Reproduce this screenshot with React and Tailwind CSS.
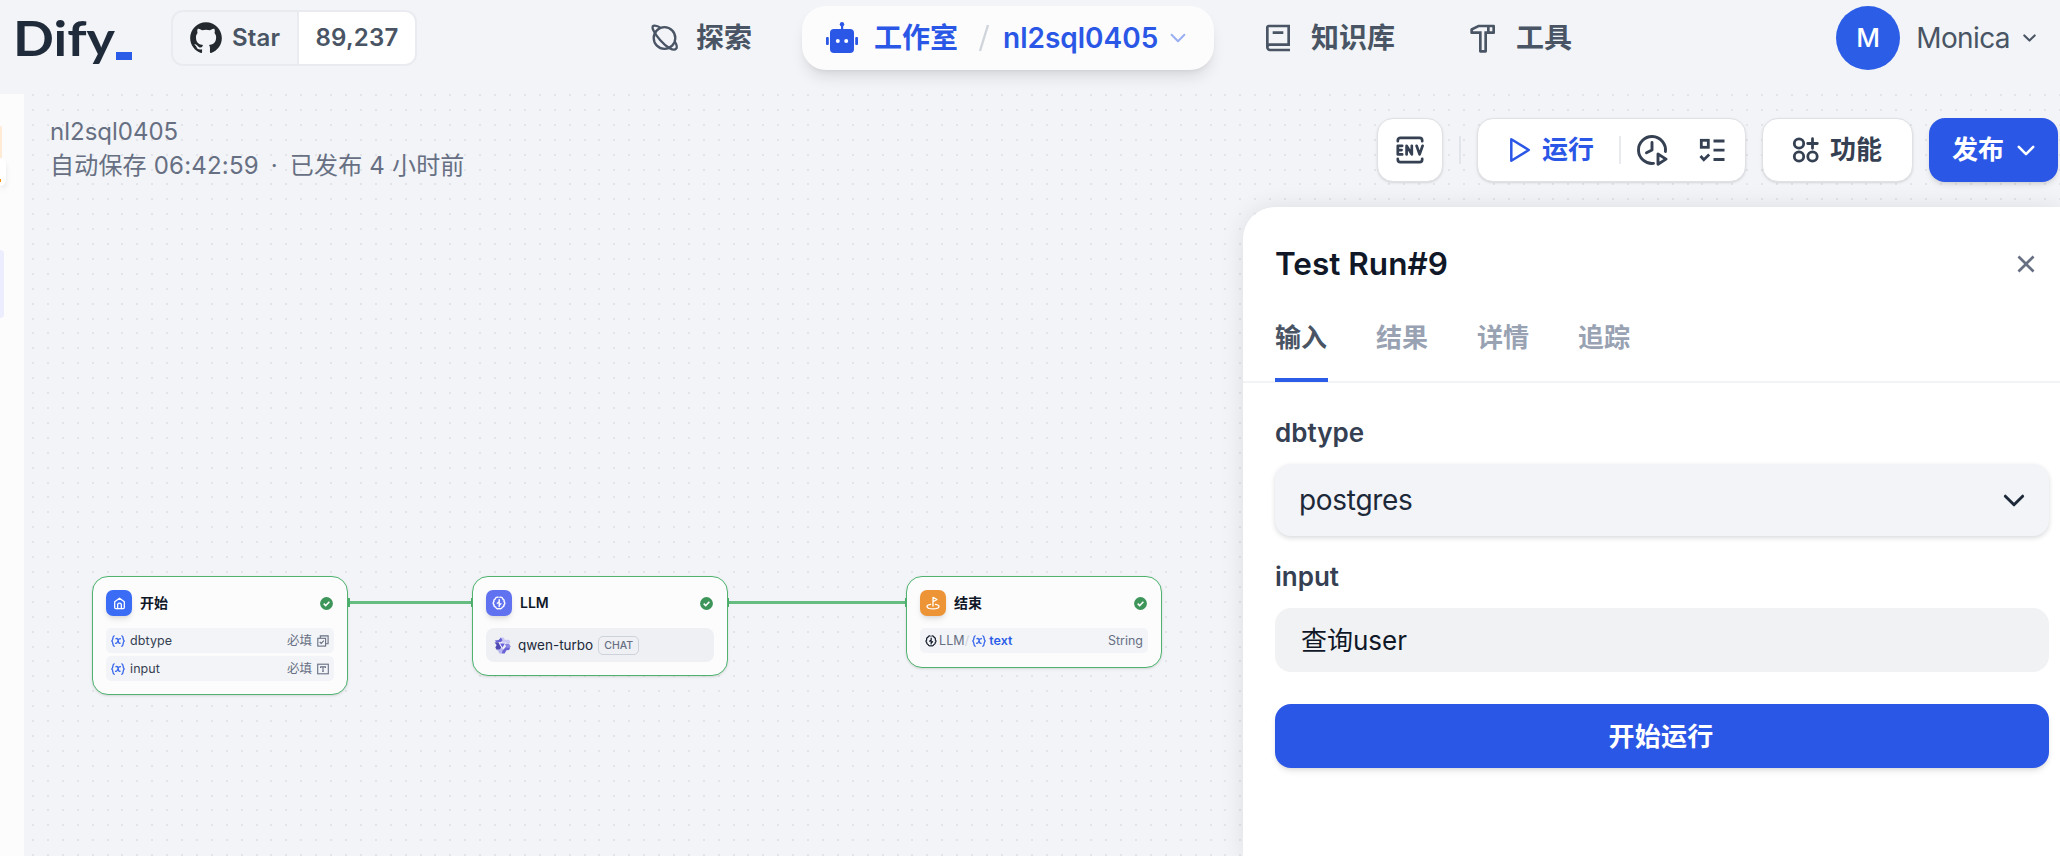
import React from "react";
import { RiHammerLine, RiBook2Line, RiCloseLine, RiGithubFill } from "react-icons/ri";

const dotPath = (() => {
  let d = "";
  for (let r = 0; r < 52; r++)
    for (let c = 0; c < 137; c++)
      d += `M${Math.round(8 + c * 14.906)} ${Math.round(r * 14.906)}h2v2h-2z`;
  return d;
})();

const Chevron = ({ className, w = 2.4 }) => (
  <svg viewBox="0 0 20 12" className={className} fill="none" stroke="currentColor" strokeWidth={w} strokeLinecap="round" strokeLinejoin="round">
    <path d="M2 2l8 8 8-8" />
  </svg>
);

const Explore = () => (
  <svg viewBox="0 0 28 28" className="h-7 w-7 overflow-visible" fill="none" stroke="currentColor" strokeWidth="2.3">
    <circle cx="14.500" cy="14" r="10.800" />
    <path d="M24.800 17.500c2 3.300 2.500 6 1.300 7.300-2.400 2.500-9.600-1.300-15.800-8.500S1 2.900 3.300 1.900c1.700-.8 4.700.2 8 2.300" />
  </svg>
);

const Robot = () => (
  <svg viewBox="0 0 32 32" className="h-8 w-8" fill="currentColor">
    <circle cx="16" cy="2.200" r="2.200" />
    <rect x="15" y="3" width="2.200" height="6" />
    <rect x="4" y="7" width="24" height="24" rx="4" />
    <rect x="0" y="15" width="2.800" height="8" rx="1" />
    <rect x="29.200" y="15" width="2.800" height="8" rx="1" />
    <circle cx="11.800" cy="19" r="2" fill="#fff" />
    <circle cx="20.200" cy="19" r="2" fill="#fff" />
  </svg>
);

const Env = () => (
  <svg viewBox="0 0 28 28" className="h-7 w-7" fill="none" stroke="currentColor" strokeWidth="2.700" strokeLinecap="round" strokeLinejoin="round">
    <path d="M1.800 5.200V4.400a2.600 2.600 0 0 1 2.600-2.600h19.200a2.600 2.600 0 0 1 2.600 2.600v.8M1.800 22.800v.8a2.600 2.600 0 0 0 2.600 2.600h19.200a2.600 2.600 0 0 0 2.600-2.600v-.8" />
    <path d="M6.200 9.800H1.800v8.600h4.400M1.800 14.100H5.600M10.600 18.400V9.800l5.200 8.600V9.800M20.600 9.800l3 8.600 3-8.600" />
  </svg>
);

const Play = () => (
  <svg viewBox="0 0 22 26" className="h-[26px] w-[22px]" fill="none" stroke="currentColor" strokeWidth="2.500" strokeLinejoin="round">
    <path d="M2.300 2.200v21.600L19.800 13z" />
  </svg>
);

const History = () => (
  <svg viewBox="0 0 32 32" className="h-8 w-8" fill="none" stroke="currentColor" strokeWidth="2.900" strokeLinecap="round" strokeLinejoin="round">
    <path d="M17.500 29.400A13.500 13.500 0 1 1 29.400 17.500" />
    <path d="M16 8.500V16l-5.500 2.800" />
    <path d="M22 20v10.200l8-5.100z" />
  </svg>
);

const Checklist = () => (
  <svg viewBox="0 0 26 26" className="h-[26px] w-[26px]" fill="none" stroke="currentColor" strokeWidth="2.800">
    <rect x="2.300" y="3.300" width="7" height="7" />
    <path d="M14.500 4h11M14.500 13.200h11M14.500 22.500h11M1.500 19l3.300 3.700 5.400-5.200" />
  </svg>
);

const Features = () => (
  <svg viewBox="0 0 28 28" className="h-7 w-7" fill="none" stroke="currentColor" strokeWidth="2.800" strokeLinecap="round">
    <circle cx="7" cy="7.500" r="4.700" />
    <circle cx="7" cy="20.500" r="4.700" />
    <circle cx="20.500" cy="20.500" r="4.700" />
    <path d="M20.500 2.700v9.600M15.700 7.500h9.600" />
  </svg>
);

const Check = () => (
  <svg viewBox="0 0 13 13" className="mr-[1px] h-[13px] w-[13px]">
    <circle cx="6.500" cy="6.500" r="6.400" fill="#3d9559" />
    <path d="M3.700 6.600l2 2 3.700-3.800" fill="none" stroke="#fff" strokeWidth="1.500" />
  </svg>
);

const Var = () => (
  <svg viewBox="0 0 14 12" className="h-3 w-3.5 shrink-0 text-[#3a68ec]" fill="none" stroke="currentColor" strokeWidth="1.350" strokeLinecap="round">
    <path d="M3.200.8C1.200.8 2.600 4.800.8 6c1.800 1.200.4 5.200 2.400 5.200M10.800.8c2 0 .6 4 2.400 5.200-1.800 1.200-.4 5.200-2.400 5.200" />
    <path d="M5 3.700c1.600-.6 2.100.7 2.300 2.300s.5 2.800 1.800 2.200M9.400 3.700C8.100 3.400 7 5.500 6.800 6.100S5.700 8.700 4.600 8.300" />
  </svg>
);

const Brain = ({ className }) => (
  <svg viewBox="0 0 14 14" className={className} fill="none" stroke="currentColor" strokeWidth="1.400" strokeLinecap="round" strokeLinejoin="round">
    <path d="M6 1.200C4.500.8 3.400 1.900 3.400 2.800 1.600 3.400 1.700 5 2 5.700.8 6.500 1 8 2 8.600c-.2 1.400.7 2.300 1.700 2.600.6 1.500 2 1.800 2.900 1.400M8 1.200c1.500-.4 2.600.7 2.600 1.600 1.800.6 1.700 2.200 1.400 2.900 1.200.8 1 2.300 0 2.900.2 1.400-.7 2.300-1.700 2.600-.6 1.500-2 1.800-2.900 1.400" />
    <path d="M7.200 3.600v6.800M7.200 5.800L5.300 7.200M7.200 9.200l1.700-1.400" />
  </svg>
);

const HomeGlyph = () => (
  <svg viewBox="0 0 14 14" className="h-[13px] w-[13px]" fill="none" stroke="#fff" strokeWidth="1.400" strokeLinejoin="round" strokeLinecap="round">
    <path d="M1.800 5.200L7 1.300l5.200 3.900v6.200c0 .8-.4 1.200-1.200 1.200H3c-.8 0-1.200-.4-1.200-1.200z" />
    <path d="M5 12.400V8.600a2 2 0 0 1 4 0v3.800" />
  </svg>
);

const FlagGlyph = () => (
  <svg viewBox="0 0 14 14" className="h-3.5 w-3.5" fill="none" stroke="#fff" strokeWidth="1.300" strokeLinejoin="round" strokeLinecap="round">
    <path d="M7 10V1.300l4 2.200-4 2.200" />
    <path d="M4.600 8.300C2.600 8.600 1 9.400 1 10.400 1 11.800 3.700 12.800 7 12.800s6-1 6-2.400c0-1-1.600-1.800-3.600-2.100" />
  </svg>
);

const SelectGlyph = () => (
  <svg viewBox="0 0 12 12" className="h-3 w-3" fill="none" stroke="currentColor" strokeWidth="1.100">
    <rect x=".8" y="3.300" width="7.800" height="7.800" />
    <path d="M3.300 3V.9h7.800v7.800H8.800M2.700 7l1.500 1.500 2.700-2.800" />
  </svg>
);

const TextGlyph = () => (
  <svg viewBox="0 0 12 12" className="h-3 w-3" fill="none" stroke="currentColor" strokeWidth="1.100">
    <rect x=".7" y="1.200" width="10.600" height="9.600" />
    <path d="M3.600 5V3.900h4.800V5M6 3.900v4.300M5 8.300h2" />
  </svg>
);

const Qwen = () => (
  <svg viewBox="0 0 18 18" className="h-[17px] w-[17px]">
    <path d="M7.300.6h3l1.100 2.200h4.700l1.200 2.400-1.300 2.200-6.300-.1-3.300-3.700z" fill="#cbc9f3" />
    <path d="M7.300.6L9 3.400 6.900 5.600H2.200L1 3.800l3.800-.7z" fill="#6a63d6" />
    <path d="M.6 5.900l4-.3 3.100 5.500-1.500 2.300H2.800L1.400 11l1.400-2.400z" fill="#5049b4" />
    <path d="M2.800 13.400l3.400-.2 2.700-2.100 1.600 3.400-2.300 2.900H5.700l-1.200-2.600z" fill="#b7b4ef" />
    <path d="M8.200 17.400l1-3 5.100-5.800 2.900 2.700-1.300 2.400-2.700.2-1.900 3.500z" fill="#6a63d6" />
    <path d="M16 7.400l1.400 2.400-.6 1.500-3.300.3-2.100-4.200z" fill="#8b86e4" />
    <path d="M5 5.900h8L9 12.700z" fill="#f1f1fb" />
    <path d="M6.500 7h5L9 11.200z" fill="#655ddb" />
  </svg>
);

const NodeCard = ({ className, color, glyph, title, children }) => (
  <div className={`absolute top-[482px] w-[256px] rounded-[16px] border-[1.5px] border-[#4fb36f] bg-[#fcfcfd] px-[13px] pb-[13px] pt-[13px] shadow-sm ${className}`}>
    <div className="flex h-[26px] items-center">
      <div className={`flex h-[26px] w-[26px] items-center justify-center rounded-[7px] shadow-md ${color}`}>{glyph}</div>
      <span className="ml-2 flex-1 text-[14px] font-semibold leading-5 text-[#101828]">{title}</span>
      <Check />
    </div>
    {children}
  </div>
);

const StartRow = ({ name, glyph }) => (
  <div className="flex h-[25px] items-center rounded-[5px] bg-[#f2f4f7] px-[5px] pt-[1px] text-[12.500px] text-[#495464]">
    <Var />
    <span className="ml-[5px] flex-1 tracking-[0.1px] text-[#354052]">{name}</span>
    <span className="mr-[5px] text-[#676f83]">必填</span>
    <span className="text-[#676f83]">{glyph}</span>
  </div>
);

const Edge = ({ className }) => (
  <div className={`absolute top-[504px] flex h-[9px] items-center justify-between ${className}`}>
    <span className="h-[9px] w-[2px] bg-[#4fb36f]" />
    <span className="h-[3px] flex-1 bg-[#66bd82]" />
    <span className="h-[9px] w-[2px] bg-[#4fb36f]" />
  </div>
);

const Header = () => (
  <header className="flex h-[94px] items-start text-[28px] font-semibold leading-[64px] text-[#495464]">
    <div className="flex h-[76px] w-[171px] items-center pl-[13px]">
      <svg viewBox="0 0 120 64" className="h-16 w-[120px] overflow-visible">
        <text x="0" y="50" textLength="102" lengthAdjust="spacingAndGlyphs" fontFamily="Lato, sans-serif" fontWeight="700" fontSize="47.500" fill="#1f2a3b">Dify</text>
        <rect x="103" y="46" width="16" height="8" fill="#2b5ce8" />
      </svg>
    </div>
    <div className="mt-[10px] flex h-[56px] w-[246px] overflow-hidden rounded-xl border-2 border-[#e9ebf0] text-[24px] leading-[52px]">
      <div className="flex w-[126px] items-center border-r-2 border-[#e9ebf0] pl-[14px]">
        <RiGithubFill className="h-[38px] w-[38px] text-[#24292f]" />
        <span className="ml-[7px] tracking-[0.2px]">Star</span>
      </div>
      <div className="flex-1 bg-white text-center tracking-[0.2px]">89,237</div>
    </div>
    <nav className="mt-[6px] flex h-16 items-center">
      <div className="ml-[233px] flex w-[152px] items-center gap-[18px]"><Explore /><span>探索</span></div>
      <div className="flex h-16 w-[412px] items-center rounded-[24px] bg-[#fcfcfd] pl-6 text-[#2b57e6] shadow-lg">
        <Robot />
        <span className="ml-4">工作室</span>
        <svg viewBox="0 0 12 28" className="ml-5 h-7 w-3" stroke="#d0d5dc" strokeWidth="2.400"><path d="M2 27L10 1" /></svg>
        <span className="ml-[13px]">nl2sql0405</span>
        <Chevron className="ml-3 h-[10px] w-4 text-[#98aef3]" />
      </div>
      <div className="ml-[48px] flex w-[205px] items-center gap-[17px]"><RiBook2Line className="h-8 w-8" /><span>知识库</span></div>
      <div className="flex items-center gap-[17px]"><RiHammerLine className="h-8 w-8" /><span>工具</span></div>
    </nav>
    <div className="ml-auto mr-6 mt-[6px] flex h-16 items-center font-normal">
      <div className="flex h-16 w-16 items-center justify-center rounded-full bg-[#2c5de6] text-[26px] font-medium text-white">M</div>
      <span className="ml-4 tracking-[-0.6px]">Monica</span>
      <Chevron className="ml-[13px] h-2 w-[13px]" w={3.2} />
    </div>
  </header>
);

const box = "flex h-16 items-center rounded-[16px] border border-[#dfe1e5] bg-white shadow-sm";

const Toolbar = () => (
  <div className="flex pt-[22px] text-[26px] font-semibold leading-8 text-[#354052]">
    <div className="-mt-[1px] pl-[26px] text-[24px] font-normal leading-[34px] text-[#676f83]">
      <div>nl2sql0405</div>
      <div className="flex gap-[12px]"><span className="tracking-[0.2px]">自动保存 06:42:59</span><span>·</span><span className="tracking-[0.2px]">已发布 4 小时前</span></div>
    </div>
    <div className="ml-auto mr-[2px] mt-[1px] flex items-center">
      <div className={`${box} w-[66px] justify-center`}><Env /></div>
      <div className="mx-4 h-7 w-[2px] bg-[#e2e5ea]" />
      <div className={`${box} w-[269px] pl-[31px] text-[#2b57e6]`}>
        <Play />
        <span className="ml-[11px]">运行</span>
        <span className="ml-[25px] h-7 w-[2px] bg-[#e8eaee]" />
        <span className="ml-[15px] text-[#354052]"><History /></span>
        <span className="ml-[31px] text-[#354052]"><Checklist /></span>
      </div>
      <div className={`${box} ml-4 w-[151px] pl-[29px]`}><Features /><span className="ml-[10px]">功能</span></div>
      <div className="ml-4 flex h-16 w-[129px] items-center rounded-[16px] bg-[#2b57e6] pl-[23px] text-white shadow-md">
        发布<Chevron className="ml-[13px] h-[11px] w-[18px]" w={2.8} />
      </div>
    </div>
  </div>
);

const Panel = () => (
  <section className="absolute bottom-0 right-0 top-[113px] w-[817px] rounded-tl-[32px] bg-white text-[26px] font-semibold text-[#354052] shadow-[0_0_24px_rgba(16,24,40,0.09)]">
    <div className="flex items-center justify-between pl-8 pr-[18px] pt-[37px]">
      <h2 className="text-[31.500px] leading-[40px] text-[#101828]">Test Run#9</h2>
      <RiCloseLine className="h-8 w-8 text-[#676f83]" />
    </div>
    <div className="mt-[19px] flex h-[80px] gap-[48px] border-b-2 border-[#f2f3f5] pl-8 leading-[70px] text-[#98a2b2]">
      <span className="-mb-[1px] w-[53px] border-b-4 border-[#2b5ce8] text-[#495464]">输入</span>
      <span className="w-[53px]">结果</span>
      <span className="w-[53px]">详情</span>
      <span>追踪</span>
    </div>
    <div className="flex flex-col pl-8 pr-[11px] pt-[34px]">
      <label className="leading-[32px]">dbtype</label>
      <div className="mt-[15px] flex h-[72px] items-center justify-between rounded-[16px] bg-[#f2f4f7] pl-6 pr-[24px] text-[28px] font-normal tracking-[-0.3px] text-[#1d2939] shadow-[0_2px_5px_rgba(16,24,40,0.16)]">
        postgres
        <Chevron className="h-[13px] w-[22px]" w={2.7} />
      </div>
      <label className="mt-[25px] leading-[32px]">input</label>
      <div className="mt-[15px] flex h-16 items-center rounded-[16px] bg-[#f1f2f4] pl-[26px] font-normal text-[#101828]">查询user</div>
      <button className="mt-8 h-16 rounded-[16px] bg-[#2b57e6] pr-[2px] font-semibold tracking-[0.3px] text-white shadow-md">开始运行</button>
    </div>
  </section>
);

export default function App() {
  return (
    <div className="flex h-[856px] w-[2060px] flex-col overflow-hidden bg-[#f2f4f7] font-[Inter,'Noto_Sans_CJK_SC',sans-serif]">
      <Header />
      <div className="flex flex-1">
        <aside className="relative w-6 bg-[#fcfcfd]">
          <div className="absolute left-0 top-8 h-14 w-[2px] rounded-r bg-[#ffead5]" />
          <div className="absolute left-0 top-16 flex h-7 w-[6px] items-center rounded-r-[6px] bg-white shadow-md">
            <span className="mt-4 h-[3px] w-[1px] bg-[#f79009]" />
          </div>
          <div className="absolute left-0 top-[156px] h-[68px] w-1 rounded-r bg-[#eceeff]" />
        </aside>
        <main className="relative flex-1">
          <svg className="absolute inset-0 h-full w-full" shapeRendering="crispEdges"><path d={dotPath} fill="#e2e4e9" /></svg>
          <div className="relative"><Toolbar /></div>
          <Edge className="left-[324px] w-[125px]" />
          <Edge className="left-[703px] w-[180px]" />
          <NodeCard className="left-[68px] h-[119px]" color="bg-[#3b6cf6]" glyph={<HomeGlyph />} title="开始">
            <div className="mt-3 flex flex-col gap-[3px]">
              <StartRow name="dbtype" glyph={<SelectGlyph />} />
              <StartRow name="input" glyph={<TextGlyph />} />
            </div>
          </NodeCard>
          <NodeCard className="left-[448px] h-[100px]" color="bg-[#6172f0]" glyph={<Brain className="h-3.5 w-3.5 text-white" />} title="LLM">
            <div className="mt-3 flex h-[34px] items-center rounded-lg bg-[#eef0f4] px-2 pt-[1px] text-[13.500px] text-[#1d2939]">
              <Qwen /><span className="ml-[7px]">qwen-turbo</span>
              <span className="ml-[5px] flex h-[19px] items-center rounded-[5px] border border-[#ced2da] px-[5px] text-[10.500px] font-medium text-[#676f83]">CHAT</span>
            </div>
          </NodeCard>
          <NodeCard className="left-[882px] h-[92px]" color="bg-[#ec9436]" glyph={<FlagGlyph />} title="结束">
            <div className="mt-3 flex h-[25px] items-center rounded-[5px] bg-[#f2f4f7] px-[5px] pt-[1px] text-[12.500px] text-[#676f83]">
              <Brain className="h-3 w-3 text-[#101828]" /><span className="ml-[2px] tracking-[0.1px]">LLM</span>
              <span className="mr-[3px] text-[#d0d5dc]">/</span><Var />
              <span className="ml-[3px] flex-1 font-semibold text-[#2b5ce8]">text</span>
              <span>String</span>
            </div>
          </NodeCard>
          <Panel />
        </main>
      </div>
    </div>
  );
}
